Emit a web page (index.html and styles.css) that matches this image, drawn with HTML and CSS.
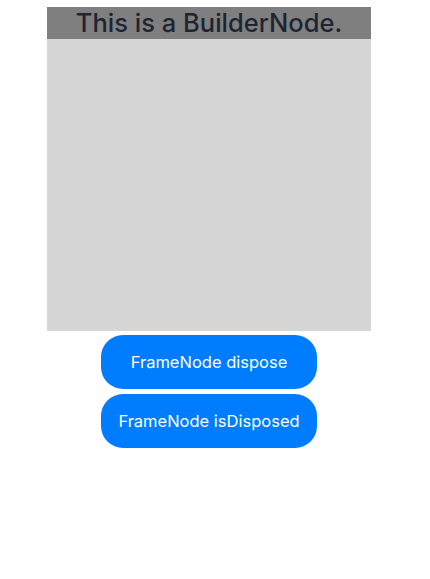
FILE: index.html
```html
<!DOCTYPE html>
<html lang="en">
  <head>
    <meta charset="UTF-8" />
    <title>BuilderNode</title>
    <link rel="stylesheet" href="styles.css">
  </head>
  <body>
    <div class="page">
      <div class="node-box">
        <div class="node-title">This is a BuilderNode.</div>
      </div>
      <button class="action-btn" type="button">FrameNode dispose</button>
      <button class="action-btn" type="button">FrameNode isDisposed</button>
    </div>
  </body>
</html>
```

FILE: styles.css
```css
body {
  margin: 0;
  background: #fefefe;
  font-family: Inter, "Open Sans", sans-serif;
}

.page {
  width: 324px;
  margin-left: 47px;
  padding-top: 7px;
  display: flex;
  flex-direction: column;
  align-items: center;
}

.node-box {
  width: 324px;
  height: 324px;
  background: #d6d6d6;
}

.node-title {
  height: 32px;
  line-height: 32px;
  background: #7f7f7f;
  color: #1d2533;
  font-size: 25.5px;
  font-weight: 500;
  text-align: center;
}

.action-btn {
  width: 216px;
  height: 54px;
  margin-top: 4px;
  border: none;
  border-radius: 22px;
  background: #007dff;
  color: #fff;
  font-family: inherit;
  font-size: 16.5px;
}

.action-btn + .action-btn {
  margin-top: 5px;
}
```
